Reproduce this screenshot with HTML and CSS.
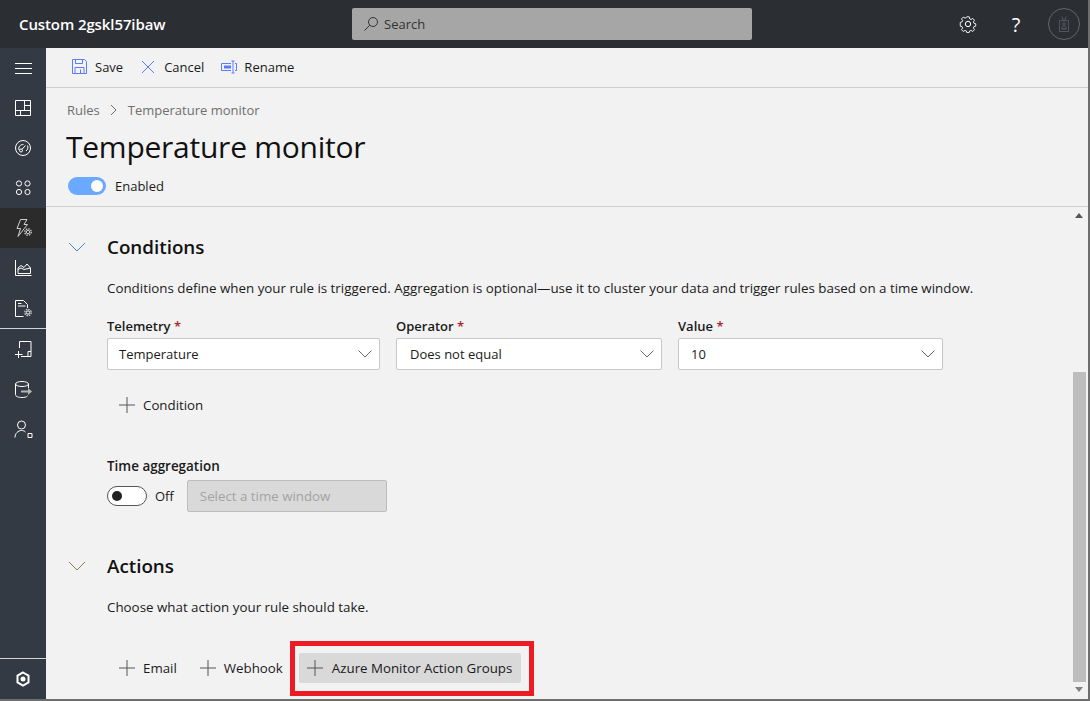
FILE: index.html
```html
<!DOCTYPE html>
<html lang="en">
<head>
<meta charset="utf-8" />
<title>Temperature monitor</title>
<link rel="stylesheet" href="styles.css">
</head>
<body>
  <header class="topbar">
    <div class="app-name">Custom 2gskl57ibaw</div>
    <div class="search">
      <svg width="16" height="16" viewBox="0 0 16 16"><circle cx="10" cy="6" r="4.5" /><path d="M6.700 9.300 1.500 14.500" /></svg>
      <span>Search</span>
    </div>
    <div class="top-icons">
      <svg class="gear" width="18" height="18" viewBox="0 0 18 18"><path d="M7.600 1h2.800l.4 2.300 1.500.7 2-1.200 1.900 2-1.200 1.900.6 1.500 2 .5v2.700l-2 .5-.6 1.500 1.200 1.900-1.900 2-2-1.200-1.500.7-.4 1.600H7.600l-.4-1.600-1.500-.7-2 1.200-1.900-2 1.200-1.900-.6-1.500-2-.5V7.200l2-.5.6-1.500-1.200-1.900 1.900-2 2 1.200 1.500-.7z" transform="translate(.9 .9) scale(.9)" /><circle cx="9" cy="9" r="2.700" /></svg>
      <span class="help">?</span>
      <div class="avatar">
        <svg width="16" height="22" viewBox="0 0 16 22"><path d="M2 6.500h12V21H2zM5 1l2.500 5.500M11 1 8.500 6.500M5 17.500c0-3 1-4 3-4s3 1 3 4zM6 17.500h4" /><circle cx="8" cy="11" r="1.800" /></svg>
      </div>
    </div>
  </header>

  <div class="shell">
    <nav class="sidebar">
      <a class="nav-item"><svg viewBox="0 0 20 20"><path d="M2 5.500h17M2 10.500h17M2 15.500h17" /></svg></a>
      <a class="nav-item"><svg viewBox="0 0 20 20"><path d="M2.500 2.500h15v15h-15zM11.500 2.500v10M11.500 7.500h6M2.500 12.500h15M7.500 12.500v5" /></svg></a>
      <a class="nav-item"><svg viewBox="0 0 20 20"><circle cx="10" cy="10" r="7.500" /><circle cx="8" cy="12.500" r="1.500" /><path d="M9 11.300 12.500 7.500M6 12c-1-3 1-5.500 4.500-5.500M14.500 7.500c.8 1.800.5 4-1.500 5.500" /></svg></a>
      <a class="nav-item"><svg viewBox="0 0 20 20"><circle cx="6" cy="5.500" r="2.600" /><circle cx="14.500" cy="5.500" r="2.600" /><circle cx="6" cy="14" r="2.600" /><circle cx="14.500" cy="14" r="2.600" /></svg></a>
      <a class="nav-item active"><svg viewBox="0 0 20 20"><path class="dim" d="M7.500 1.500h6.500l-3 5h3.500L5 18.500l2.500-8H4z" /><circle class="gear-bg" cx="15" cy="14" r="4.500" /><circle class="dim" cx="15" cy="14" r="1.700" /><circle class="teeth" cx="15" cy="14" r="3.200" /></svg></a>
      <a class="nav-item"><svg viewBox="0 0 20 20"><path d="M2.500 2v15.500h16" /><path d="M5 15.500V10l3-2.500 3 2 3-3.500 3.500 4v5.500zM5 11.500l3-1.500 3 1.500 6.500-1.500" /></svg></a>
      <a class="nav-item"><svg viewBox="0 0 20 20"><path d="M10.500 18.500h-8v-16h8l4 4V10M5 5.500h3.500M5 8h7.500" /><circle cx="15" cy="14.500" r="1.700" /><circle class="teeth" cx="15" cy="14.500" r="3.200" /></svg></a>
      <div class="nav-rule"></div>
      <a class="nav-item"><svg viewBox="0 0 20 20"><path d="M6.500 9V2.500h11.500v15H8M2 15.500h7.500M5.500 12v7M15 17.500v-5h3" /></svg></a>
      <a class="nav-item"><svg viewBox="0 0 20 20"><ellipse cx="9" cy="5" rx="6.500" ry="2.500" /><path d="M2.500 5v10.500c0 2 3 3 6.500 3 2.500 0 4.500-.5 5.500-1.500M15.500 5v4" /><path class="arrow-line" d="M8 12.500h8" /><path class="solid-dim" d="M15 9l4 3.500-4 3.500z" /></svg></a>
      <a class="nav-item"><svg viewBox="0 0 20 20"><circle cx="8.500" cy="6" r="4" /><path d="M2 18.500c0-4 3-7 6.500-7 1.500 0 3 .5 4 1.500M15 14.500h4v4h-4z" /></svg></a>
      <div class="nav-spacer"></div>
      <div class="nav-rule"></div>
      <a class="nav-item nav-foot"><svg viewBox="0 0 20 20"><path class="thick" d="M10 3.500l5.500 3.200v6.600L10 16.500l-5.500-3.200V6.700z" /><circle class="solid" cx="10" cy="10" r="2.500" /></svg></a>
    </nav>

    <main class="content">
      <div class="toolbar">
        <button class="tool tool-save">
          <svg width="15" height="15" viewBox="0 0 15 15"><path d="M.5.500h12l2 2v12H.5zM3.500.5v4h7v-4M3 14.500v-6h9v6M8.500 10.500v4" /></svg>
          Save
        </button>
        <button class="tool tool-cancel">
          <svg width="14" height="14" viewBox="0 0 14 14"><path d="M1 1l12 12M13 1 1 13" /></svg>
          Cancel
        </button>
        <button class="tool tool-rename">
          <svg width="16" height="16" viewBox="0 0 16 16"><path class="solid" d="M3 6.500h7v3H3z" /><path d="M10 4.500H.5v7H10M12 2v12M10.500 2h3M10.500 14h3M14 4.500h1.500v7H14" /></svg>
          Rename
        </button>
      </div>

      <div class="page-head">
        <div class="crumbs">
          <span>Rules</span>
          <svg width="8" height="12" viewBox="0 0 8 12"><path d="M1 1l5 5-5 5" /></svg>
          <span>Temperature monitor</span>
        </div>
        <h1>Temperature monitor</h1>
        <div class="enabled">
          <span class="switch on"></span>
          <span>Enabled</span>
        </div>
      </div>

      <div class="scroll-wrap">
        <div class="form">
          <section class="conditions">
            <div class="section-head">
              <svg class="chev" width="18" height="10" viewBox="0 0 18 10"><path d="M1 1l8 8 8-8" /></svg>
              <h2>Conditions</h2>
            </div>
            <p class="desc">Conditions define when your rule is triggered. Aggregation is optional—use it to cluster your data and trigger rules based on a time window.</p>
            <div class="fields">
              <div class="field w-telemetry">
                <label>Telemetry <em>*</em></label>
                <div class="select">
                  <span>Temperature</span>
                  <svg width="14" height="8" viewBox="0 0 14 8"><path d="M.5.500l6.500 6.500 6.500-6.500" /></svg>
                </div>
              </div>
              <div class="field w-operator">
                <label>Operator <em>*</em></label>
                <div class="select">
                  <span>Does not equal</span>
                  <svg width="14" height="8" viewBox="0 0 14 8"><path d="M.5.500l6.500 6.500 6.500-6.500" /></svg>
                </div>
              </div>
              <div class="field w-value">
                <label>Value <em>*</em></label>
                <div class="select">
                  <span>10</span>
                  <svg width="14" height="8" viewBox="0 0 14 8"><path d="M.5.500l6.500 6.500 6.500-6.500" /></svg>
                </div>
              </div>
            </div>
            <div class="add-row">
              <button class="add">
                <svg width="16" height="16" viewBox="0 0 16 16"><path d="M8 0v16M0 8h16" /></svg>
                Condition
              </button>
            </div>
            <div class="aggregation">
              <label>Time aggregation</label>
              <div class="agg-row">
                <span class="switch"></span>
                <span class="off">Off</span>
                <div class="time-window">Select a time window</div>
              </div>
            </div>
          </section>

          <section class="actions">
            <div class="section-head">
              <svg class="chev" width="18" height="10" viewBox="0 0 18 10"><path d="M1 1l8 8 8-8" /></svg>
              <h2>Actions</h2>
            </div>
            <p class="desc">Choose what action your rule should take.</p>
            <div class="action-row">
              <button class="add add-email">
                <svg width="16" height="16" viewBox="0 0 16 16"><path d="M8 0v16M0 8h16" /></svg>
                Email
              </button>
              <button class="add">
                <svg width="16" height="16" viewBox="0 0 16 16"><path d="M8 0v16M0 8h16" /></svg>
                Webhook
              </button>
              <div class="callout">
                <button class="add hovered">
                  <svg width="16" height="16" viewBox="0 0 16 16"><path d="M8 0v16M0 8h16" /></svg>
                  Azure Monitor Action Groups
                </button>
              </div>
            </div>
          </section>
        </div>

        <div class="scrollbar">
          <span class="arrow up"></span>
          <div class="thumb"></div>
          <span class="arrow down"></span>
        </div>
      </div>
    </main>
  </div>
</body>
</html>
```

FILE: styles.css
```css
* {
    box-sizing: border-box;
}

html,
body {
    height: 100%;
    margin: 0;
}

body {
    display: flex;
    flex-direction: column;
    overflow: hidden;
    background: #f2f2f2;
    color: #1a1a1a;
    font-family: "Open Sans", "Noto Sans", sans-serif;
    font-size: 13px;
    border-right: 2px solid #6e6e6e;
    border-bottom: 2px solid #6e6e6e;
}

button {
    font: inherit;
    color: inherit;
    background: none;
    border: 0;
    padding: 0;
}

svg {
    fill: none;
    stroke-width: 1;
    flex: none;
}

/* top bar */
.topbar {
    display: flex;
    align-items: center;
    height: 48px;
    flex: none;
    background: #2b2e33;
    color: #fff;
}

.app-name {
    width: 352px;
    padding-left: 19px;
    font-size: 15px;
    font-weight: 600;
    letter-spacing: -0.1px;
}

.search {
    display: flex;
    align-items: center;
    gap: 5px;
    width: 400px;
    height: 32px;
    padding-left: 11px;
    background: #a6a6a6;
    border-radius: 2px;
    color: #333;
}

.search svg {
    stroke: #333;
}

.top-icons {
    display: flex;
    align-items: center;
    margin-left: auto;
    margin-right: 8px;
}

.gear {
    stroke: #fff;
    margin-right: 31px;
}

.help {
    width: 16px;
    margin-right: 24px;
    text-align: center;
    font-size: 20px;
}

.avatar {
    display: flex;
    align-items: center;
    justify-content: center;
    width: 32px;
    height: 32px;
    border: 1px solid #62666b;
    border-radius: 50%;
}

.avatar svg {
    stroke: #62666b;
    width: 12px;
    height: 18px;
}

/* side nav */
.shell {
    display: flex;
    flex: 1;
    min-height: 0;
}

.sidebar {
    display: flex;
    flex-direction: column;
    flex: none;
    width: 46px;
    background: #333a43;
}

.nav-item {
    display: flex;
    align-items: center;
    justify-content: center;
    height: 40px;
}

.nav-item svg {
    width: 20px;
    height: 20px;
    stroke: #fff;
}

.nav-item .solid {
    fill: #fff;
    stroke: none;
}

.nav-item .thick {
    stroke-width: 2;
}

.nav-item .dim {
    stroke: #d0d0d0;
}

.nav-item .gear-bg {
    fill: #2b2b2b;
    stroke: none;
}

.nav-item .teeth {
    stroke: #d0d0d0;
    stroke-width: 1.3;
    stroke-dasharray: 1.5 1;
}

.nav-item .arrow-line {
    stroke: #b5b5b5;
    stroke-width: 2;
}

.nav-item .solid-dim {
    fill: #b5b5b5;
    stroke: none;
}

.nav-item.active {
    background: #2b2b2b;
}

.nav-rule {
    height: 1px;
    background: #d4d4d4;
}

.nav-spacer {
    flex: 1;
}

/* main column */
.content {
    display: flex;
    flex-direction: column;
    flex: 1;
    min-width: 0;
}

.toolbar {
    display: flex;
    align-items: center;
    flex: none;
    height: 40px;
    padding: 0 0 2px 26px;
    border-bottom: 1px solid #cfcfcf;
}

.tool {
    display: flex;
    align-items: center;
    gap: 8px;
}

.tool svg {
    stroke: #5c7cff;
}

.tool .solid {
    fill: #5c7cff;
    stroke: none;
}

.tool-cancel {
    gap: 9px;
    margin-left: 18px;
}

.tool-rename {
    gap: 7px;
    margin-left: 17px;
}

.page-head {
    flex: none;
    height: 119px;
    padding: 12px 0 0 20px;
    border-bottom: 1px solid #cfcfcf;
}

.crumbs {
    display: flex;
    align-items: center;
    gap: 10px;
    height: 20px;
    padding-left: 1px;
    color: #6f6f6f;
}

.crumbs svg {
    stroke: #6f6f6f;
}

h1 {
    margin: 5px 0 8px;
    font-size: 30px;
    font-weight: 400;
    line-height: 44px;
    letter-spacing: -0.25px;
    color: #111;
}

.enabled {
    display: flex;
    align-items: center;
    gap: 9px;
    padding-left: 2px;
}

.switch {
    display: block;
    position: relative;
    flex: none;
    width: 40px;
    height: 20px;
    border: 1px solid #555;
    border-radius: 10px;
    background: #fff;
}

.switch::after {
    content: "";
    position: absolute;
    left: 4px;
    top: 4px;
    width: 10px;
    height: 10px;
    border-radius: 50%;
    background: #222;
}

.switch.on {
    width: 38px;
    height: 18px;
    border: 0;
    background: #6aa9ff;
}

.switch.on::after {
    left: 23px;
    top: 3px;
    width: 12px;
    height: 12px;
    background: #fff;
}

/* form */
.scroll-wrap {
    display: flex;
    flex: 1;
    min-height: 0;
}

.form {
    flex: 1;
    min-width: 0;
    padding: 28px 0 0 22px;
}

.section-head {
    display: flex;
    align-items: center;
    gap: 21px;
    height: 24px;
}

.chev {
    stroke: #3a8dd6;
}

.actions .chev {
    stroke: #8a7a60;
}

h2 {
    margin: 0;
    font-size: 18.8px;
    font-weight: 600;
    color: #111;
}

.desc {
    margin: 20px 0 0 39px;
    font-size: 13.35px;
    line-height: 18px;
}

.fields {
    display: flex;
    gap: 16px;
    margin: 20px 0 0 39px;
}

.field label,
.aggregation label {
    display: block;
    height: 21px;
    font-weight: 600;
}

.aggregation label {
    font-size: 13.45px;
}

.field em {
    font-style: normal;
    color: #a4262c;
}

.w-telemetry {
    width: 273px;
}

.w-operator {
    width: 266px;
}

.w-value {
    width: 265px;
}

.select {
    display: flex;
    align-items: center;
    justify-content: space-between;
    height: 32px;
    padding: 0 7px 0 12px;
    background: #fff;
    border: 1px solid #c8c8c8;
    border-radius: 2px;
}

.w-telemetry .select {
    padding-left: 11px;
}

.w-operator .select {
    padding-left: 13px;
}

.select svg {
    stroke: #666;
}

.add-row {
    margin: 20px 0 0 39px;
}

.add {
    display: flex;
    align-items: center;
    gap: 8px;
    height: 29px;
    padding: 0 12px;
    font-size: 13.3px;
    white-space: nowrap;
}

.add-email {
    padding-right: 11px;
}

.add svg {
    stroke: #555;
}

.aggregation {
    margin: 38px 0 0 39px;
}

.agg-row {
    display: flex;
    align-items: center;
    margin-top: 2px;
}

.off {
    margin: 0 13px 0 8px;
}

.time-window {
    width: 200px;
    height: 32px;
    padding-left: 12px;
    font-size: 13.3px;
    line-height: 30px;
    color: #a3a3a3;
    background: #d9d9d9;
    border: 1px solid #bdbdbd;
    border-radius: 2px;
}

.actions {
    margin-top: 42px;
}

.action-row {
    display: flex;
    align-items: center;
    margin: 25px 0 0 39px;
}

.action-row > .add {
    margin-bottom: 2px;
}

.callout {
    margin-left: -5px;
    padding: 7px 8px 8px 4px;
    border: 5px solid #ed1c24;
}

.add.hovered {
    gap: 9px;
    width: 222px;
    height: 30px;
    padding: 0 8px;
    background: #d9d9d9;
    border-radius: 2px;
}

/* scrollbar */
.scrollbar {
    display: flex;
    flex-direction: column;
    align-items: center;
    flex: none;
    width: 14px;
    margin-right: 2px;
}

.arrow {
    width: 0;
    height: 0;
    border-left: 4px solid transparent;
    border-right: 4px solid transparent;
}

.arrow.up {
    margin-top: 6px;
    border-bottom: 5px solid #555;
}

.arrow.down {
    margin-top: 5px;
    border-top: 5px solid #808080;
}

.thumb {
    width: 13px;
    height: 310px;
    margin-top: 154px;
    background: #bdbdbd;
}
```
